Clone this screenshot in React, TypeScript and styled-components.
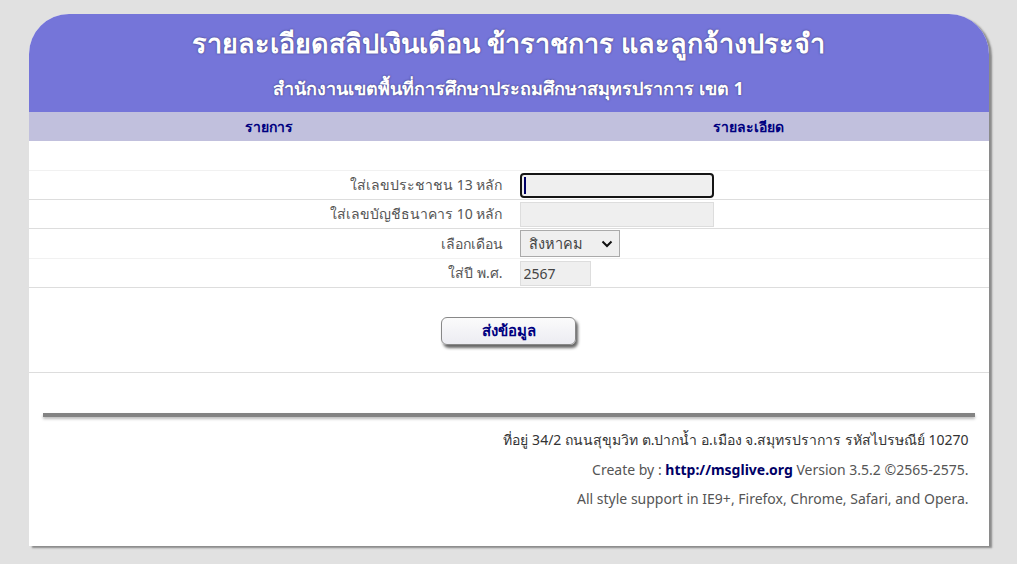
import React from "react";
import styled, { createGlobalStyle } from "styled-components";

const FONT = `Tahoma, "Noto Sans", "DejaVu Sans", "Liberation Sans", sans-serif`;

const GlobalStyle = createGlobalStyle`
  html, body {
    margin: 0;
    padding: 0;
    background: #e1e1e1;
    font-family: ${FONT};
  }
`;

const Page = styled.div`
  padding: 14px 0 16px;
`;

const Card = styled.div`
  width: 960px;
  margin: 0 auto;
  background: #fff;
  border-radius: 40px 40px 0 0;
  box-shadow: 3px 2px 2px #8a8a8a;
`;

const Header = styled.div`
  height: 98px;
  background: #7575d9;
  border-radius: 40px 40px 0 0;
  display: flex;
  flex-direction: column;
  align-items: center;
  color: #fff;
  font-weight: bold;
  text-shadow: 0 0 2px #333366;
`;

const Title = styled.div`
  font-size: 27px;
  line-height: 34px;
  margin-top: 12px;
`;

const Subtitle = styled.div`
  font-size: 18px;
  line-height: 24px;
  margin-top: 16px;
`;

const HeadRow = styled.div`
  display: grid;
  grid-template-columns: 1fr 1fr;
  height: 29px;
  background: #c1c0dd;
  color: #000080;
  font-size: 14px;
  font-weight: bold;
  align-items: center;
  text-align: center;
`;

const Row = styled.div<{ $h?: number; $faint?: boolean }>`
  display: grid;
  grid-template-columns: 480px 480px;
  height: ${(p) => p.$h ?? 28}px;
  border-bottom: 1px solid ${(p) => (p.$faint ? "#f1f1f1" : "#dddddd")};
  align-items: center;
`;

const Label = styled.div`
  text-align: right;
  padding-right: 6px;
  font-size: 14px;
  color: #555;
`;

const Field = styled.div`
  padding-left: 11px;
  display: flex;
  align-items: center;
`;

const TextBox = styled.input<{ $w: number; $focus?: boolean }>`
  box-sizing: border-box;
  width: ${(p) => p.$w}px;
  height: 25px;
  background: #efefef;
  border: ${(p) => (p.$focus ? "2px solid #151515" : "1px solid #dddddd")};
  border-radius: ${(p) => (p.$focus ? "4px" : "0")};
  font-family: ${FONT};
  font-size: 14px;
  color: #444;
  padding: 0 3px;
  outline: none;
`;

const Caret = styled.span`
  position: absolute;
  left: 4px;
  top: 4px;
  width: 2px;
  height: 17px;
  background: #000066;
`;

const FocusWrap = styled.div`
  position: relative;
  display: flex;
`;

const SelectBox = styled.div`
  box-sizing: border-box;
  width: 100px;
  height: 27px;
  background: #efefef;
  border: 1px solid #aaaaaa;
  display: flex;
  align-items: center;
  justify-content: space-between;
  padding: 0 6px 0 8px;
  font-size: 14.5px;
  color: #444;
`;

const ButtonRow = styled.div`
  height: 85px;
  border-bottom: 1px solid #dddddd;
  display: flex;
  justify-content: center;
  padding-top: 29px;
  box-sizing: border-box;
`;

const Button = styled.button`
  width: 135px;
  height: 28px;
  background: linear-gradient(#fbfbfb, #ececf2);
  border: 1px solid #888;
  border-radius: 6px;
  box-shadow: 2px 3px 3px #666;
  color: #000080;
  font-family: ${FONT};
  font-weight: bold;
  font-size: 15px;
  padding: 0;
`;

const Rule = styled.div`
  margin: 40px 14px 0;
  height: 4px;
  background: #838383;
  box-shadow: 0 2px 3px #bbb;
`;

const Footer = styled.div`
  padding: 8px 20px 32px 0;
  text-align: right;
  font-size: 14px;
  line-height: 29.5px;
  color: #555;
`;

const Address = styled.div`
  color: #333;
`;

const Link = styled.b`
  color: #000066;
`;

const Chevron = () => (
  <svg width="12" height="8" viewBox="0 0 12 8">
    <path d="M1.5 1.5 L6 6 L10.5 1.5" fill="none" stroke="#111" strokeWidth="2" />
  </svg>
);

export default function App() {
  return (
    <>
      <GlobalStyle />
      <Page>
        <Card>
          <Header>
            <Title>รายละเอียดสลิปเงินเดือน ข้าราชการ และลูกจ้างประจำ</Title>
            <Subtitle>สำนักงานเขตพื้นที่การศึกษาประถมศึกษาสมุทรปราการ เขต 1</Subtitle>
          </Header>
          <HeadRow>
            <div>รายการ</div>
            <div>รายละเอียด</div>
          </HeadRow>
          <Row $h={29} $faint />
          <Row $faint={false}>
            <Label>ใส่เลขประชาชน 13 หลัก</Label>
            <Field>
              <FocusWrap>
                <TextBox $w={194} $focus readOnly value="" />
                <Caret />
              </FocusWrap>
            </Field>
          </Row>
          <Row>
            <Label>ใส่เลขบัญชีธนาคาร 10 หลัก</Label>
            <Field>
              <TextBox $w={194} readOnly value="" />
            </Field>
          </Row>
          <Row $h={29} $faint>
            <Label>เลือกเดือน</Label>
            <Field>
              <SelectBox>
                <span>สิงหาคม</span>
                <Chevron />
              </SelectBox>
            </Field>
          </Row>
          <Row>
            <Label>ใส่ปี พ.ศ.</Label>
            <Field>
              <TextBox $w={71} readOnly value="2567" />
            </Field>
          </Row>
          <ButtonRow>
            <Button>ส่งข้อมูล</Button>
          </ButtonRow>
          <Rule />
          <Footer>
            <Address>ที่อยู่ 34/2 ถนนสุขุมวิท ต.ปากน้ำ อ.เมือง จ.สมุทรปราการ รหัสไปรษณีย์ 10270</Address>
            <div>
              Create by : <Link>http://msglive.org</Link> Version 3.5.2 ©2565-2575.
            </div>
            <div>All style support in IE9+, Firefox, Chrome, Safari, and Opera.</div>
          </Footer>
        </Card>
      </Page>
    </>
  );
}
